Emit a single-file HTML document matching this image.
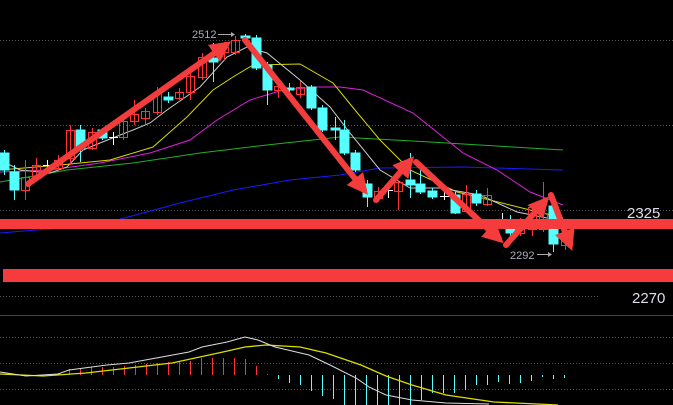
<!DOCTYPE html>
<html><head><meta charset="utf-8"><style>
html,body{margin:0;padding:0;background:#000;width:673px;height:405px;overflow:hidden}
svg{display:block}
text{font-family:"Liberation Sans",sans-serif}
</style></head><body>
<svg width="673" height="405" viewBox="0 0 673 405" xmlns="http://www.w3.org/2000/svg">
<defs>
<marker id="ah" viewBox="0 0 10 10" refX="7" refY="5" markerWidth="3.5" markerHeight="3.5" orient="auto" markerUnits="strokeWidth">
<path d="M0,0 L10,5 L0,10 z" fill="#f33c3c"/></marker>
</defs>
<g stroke="#555" stroke-width="1" stroke-dasharray="1,2">
<line x1="0" y1="40.5" x2="673" y2="40.5"/>
<line x1="0" y1="125.5" x2="673" y2="125.5"/>
<line x1="0" y1="210.5" x2="673" y2="210.5"/>
<line x1="0" y1="296.5" x2="600" y2="296.5"/>
<line x1="0" y1="337.5" x2="673" y2="337.5"/>
<line x1="0" y1="363.5" x2="673" y2="363.5"/>
<line x1="0" y1="389.5" x2="673" y2="389.5"/>
</g>
<line x1="0" y1="315.5" x2="673" y2="315.5" stroke="#444" stroke-width="1"/>

<g fill="none" stroke-width="1">
<polyline stroke="#1a1aff" points="0,233 60,228 117,220 180,203 233,190 290,180 340,175 380,168 463,167 563,170"/>
<polyline stroke="#22b022" points="0,182 67,170 133,163 200,153 267,145 340,137 430,142 513,147 563,150"/>
<polyline stroke="#e020e0" points="0,172 50,170 100,163 150,153 190,140 217,120 250,100 283,90 317,87 340,87 363,90 413,113 463,153 497,170 530,192 563,205"/>
<polyline stroke="#d8d800" points="0,170 60,165 110,160 153,147 187,117 213,90 233,77 253,65 300,64 333,83 355,110 380,140 410,170 457,192 490,200 530,210 563,218"/>
<polyline stroke="#ccc" points="0,160 20,170 50,173 67,167 83,150 100,143 133,130 150,123 167,110 200,87 227,57 247,47 267,53 300,80 330,107 350,133 380,170 410,188 440,188 480,195 517,212 547,218"/>
</g>

<g stroke-width="1">
<g stroke="#5ff" fill="#5ff">
<line x1="4.5" y1="150" x2="4.5" y2="175"/><rect x="0" y="153" width="9" height="17"/>
<line x1="14.5" y1="165" x2="14.5" y2="200"/><rect x="10" y="172" width="9" height="18"/>
<line x1="80.5" y1="125" x2="80.5" y2="162"/><rect x="76" y="130" width="9" height="18"/>
<line x1="102.5" y1="128" x2="102.5" y2="140"/><rect x="98" y="130" width="9" height="8"/>
<line x1="168.5" y1="92" x2="168.5" y2="103"/><rect x="164" y="97" width="9" height="3"/>
<line x1="213.5" y1="43" x2="213.5" y2="82"/><rect x="209" y="58" width="9" height="4"/>
<line x1="245.5" y1="34" x2="245.5" y2="40"/><rect x="241" y="36" width="9" height="2"/>
<line x1="256.5" y1="35" x2="256.5" y2="70"/><rect x="252" y="38" width="9" height="30"/>
<line x1="267.5" y1="62" x2="267.5" y2="105"/><rect x="263" y="65" width="9" height="25"/>
<line x1="289.5" y1="83" x2="289.5" y2="94"/><rect x="285" y="88" width="9" height="2"/>
<line x1="311.5" y1="85" x2="311.5" y2="110"/><rect x="307" y="87" width="9" height="21"/>
<line x1="322.5" y1="105" x2="322.5" y2="132"/><rect x="318" y="108" width="9" height="22"/>
<line x1="335.5" y1="117" x2="335.5" y2="140"/><rect x="331" y="128" width="9" height="2"/>
<line x1="344.5" y1="120" x2="344.5" y2="155"/><rect x="340" y="130" width="9" height="23"/>
<line x1="355.5" y1="150" x2="355.5" y2="172"/><rect x="351" y="153" width="9" height="17"/>
<line x1="367.5" y1="180" x2="367.5" y2="207"/><rect x="363" y="184" width="9" height="13"/>
<line x1="410.5" y1="153" x2="410.5" y2="198"/><rect x="406" y="180" width="9" height="5"/>
<line x1="420.5" y1="170" x2="420.5" y2="194"/><rect x="416" y="184" width="9" height="8"/>
<line x1="432.5" y1="188" x2="432.5" y2="199"/><rect x="428" y="191" width="9" height="6"/>
<line x1="455.5" y1="192" x2="455.5" y2="214"/><rect x="451" y="195" width="9" height="18"/>
<line x1="476.5" y1="190" x2="476.5" y2="206"/><rect x="472" y="194" width="9" height="9"/>
<line x1="510.5" y1="215" x2="510.5" y2="236"/><rect x="506" y="228" width="9" height="5"/>
<line x1="553.5" y1="195" x2="553.5" y2="252"/><rect x="549" y="206" width="9" height="38"/>
</g>
<g stroke="#f33" fill="none">
<line x1="25.5" y1="160" x2="25.5" y2="200"/><rect x="21.5" y="177.5" width="8" height="13"/>
<line x1="36.5" y1="158" x2="36.5" y2="180"/><rect x="32.5" y="165.5" width="8" height="13"/>
<line x1="58.5" y1="155" x2="58.5" y2="170"/><rect x="54.5" y="160.5" width="8" height="8"/>
<line x1="70.5" y1="125" x2="70.5" y2="165"/><rect x="66.5" y="130.5" width="8" height="28"/>
<line x1="92.5" y1="128" x2="92.5" y2="150"/><rect x="88.5" y="132.5" width="8" height="16"/>
<line x1="123.5" y1="115" x2="123.5" y2="140"/><rect x="119.5" y="121.5" width="8" height="16"/>
<line x1="134.5" y1="100" x2="134.5" y2="125"/><rect x="130.5" y="114.5" width="8" height="7"/>
<line x1="145.5" y1="108" x2="145.5" y2="124"/><rect x="141.5" y="111.5" width="8" height="7"/>
<line x1="157.5" y1="87" x2="157.5" y2="115"/><rect x="153.5" y="93.5" width="8" height="19"/>
<line x1="179.5" y1="88" x2="179.5" y2="100"/><rect x="175.5" y="92.5" width="8" height="6"/>
<line x1="190.5" y1="70" x2="190.5" y2="100"/><rect x="186.5" y="76.5" width="8" height="16"/>
<line x1="202.5" y1="53" x2="202.5" y2="80"/><rect x="198.5" y="57.5" width="8" height="20"/>
<line x1="224.5" y1="42" x2="224.5" y2="60"/><rect x="220.5" y="47.5" width="8" height="5"/>
<line x1="235.5" y1="36" x2="235.5" y2="55"/><rect x="231.5" y="40.5" width="8" height="12"/>
<line x1="278.5" y1="78" x2="278.5" y2="98"/><rect x="274.5" y="86.5" width="8" height="4"/>
<line x1="300.5" y1="81" x2="300.5" y2="98"/><rect x="296.5" y="87.5" width="8" height="7"/>
<line x1="378.5" y1="187" x2="378.5" y2="202"/><rect x="374.5" y="191.5" width="8" height="7"/>
<line x1="398.5" y1="182" x2="398.5" y2="210"/><rect x="394.5" y="182.5" width="8" height="9"/>
<line x1="466.5" y1="185" x2="466.5" y2="212"/><rect x="462.5" y="194.5" width="8" height="17"/>
<line x1="487.5" y1="188" x2="487.5" y2="206"/><rect x="483.5" y="195.5" width="8" height="9"/>
<line x1="520.5" y1="218" x2="520.5" y2="236"/><rect x="516.5" y="229.5" width="8" height="4"/>
<line x1="532.5" y1="205" x2="532.5" y2="236"/><rect x="528.5" y="207.5" width="8" height="22"/>
<line x1="543.5" y1="182" x2="543.5" y2="232"/><rect x="539.5" y="213.5" width="8" height="16"/>
<line x1="565.5" y1="230" x2="565.5" y2="250"/><rect x="561.5" y="235.5" width="8" height="10"/>
</g>
<g stroke="#fff">
<line x1="43" y1="165.5" x2="52" y2="165.5"/><line x1="47.5" y1="160" x2="47.5" y2="170"/>
<line x1="109" y1="137.5" x2="118" y2="137.5"/><line x1="113.5" y1="132" x2="113.5" y2="145"/>
<line x1="384" y1="190.5" x2="393" y2="190.5"/><line x1="388.5" y1="183" x2="388.5" y2="198"/>
<line x1="440" y1="196.5" x2="449" y2="196.5"/><line x1="444.5" y1="190" x2="444.5" y2="200"/>
<line x1="498" y1="220.5" x2="506" y2="220.5"/><line x1="502.5" y1="213" x2="502.5" y2="228"/>
</g>
</g>

<rect x="0" y="219" width="673" height="10" fill="#f53b3b"/>
<rect x="3" y="269" width="670" height="13" fill="#f53b3b"/>

<g stroke="#f33c3c" stroke-width="6" fill="none" stroke-linecap="round" marker-end="url(#ah)">
<line x1="28" y1="184" x2="226" y2="45"/>
<line x1="245" y1="40" x2="364" y2="190"/>
<line x1="376" y1="200" x2="410" y2="161"/>
<line x1="416" y1="162" x2="499" y2="239"/>
<line x1="506" y1="245" x2="545" y2="201"/>
<line x1="551" y1="195" x2="570" y2="245"/>
</g>

<text x="192" y="38" font-size="11" fill="#aab">2512</text>
<line x1="218" y1="34.5" x2="232" y2="34.5" stroke="#aaa"/><path d="M231,32 L235,34.5 L231,37z" fill="#aaa"/>
<text x="510" y="259" font-size="11" fill="#aab">2292</text>
<line x1="537" y1="254.5" x2="549" y2="254.5" stroke="#aaa"/><path d="M548,252 L552,254.5 L548,257z" fill="#aaa"/>
<text x="627" y="218" font-size="15" fill="#dde">2325</text>
<text x="632" y="303" font-size="15" fill="#dde">2270</text>

<g stroke="#f33" stroke-width="1">
<line x1="58.5" y1="375" x2="58.5" y2="373"/><line x1="69.5" y1="375" x2="69.5" y2="369"/><line x1="80.5" y1="375" x2="80.5" y2="369"/><line x1="91.5" y1="375" x2="91.5" y2="367"/><line x1="102.5" y1="375" x2="102.5" y2="367"/><line x1="113.5" y1="375" x2="113.5" y2="367"/><line x1="124.5" y1="375" x2="124.5" y2="366"/><line x1="135.5" y1="375" x2="135.5" y2="365"/><line x1="146.5" y1="375" x2="146.5" y2="364"/><line x1="157.5" y1="375" x2="157.5" y2="363"/><line x1="168.5" y1="375" x2="168.5" y2="362"/><line x1="179.5" y1="375" x2="179.5" y2="362"/><line x1="190.5" y1="375" x2="190.5" y2="361"/><line x1="201.5" y1="375" x2="201.5" y2="358"/><line x1="212.5" y1="375" x2="212.5" y2="358"/><line x1="223.5" y1="375" x2="223.5" y2="358"/><line x1="234.5" y1="375" x2="234.5" y2="358"/><line x1="245.5" y1="375" x2="245.5" y2="359"/><line x1="256.5" y1="375" x2="256.5" y2="366"/><line x1="267.5" y1="375" x2="267.5" y2="374"/>
</g>
<g stroke="#5ff" stroke-width="1">
<line x1="278.5" y1="375" x2="278.5" y2="379"/><line x1="289.5" y1="375" x2="289.5" y2="383"/><line x1="300.5" y1="375" x2="300.5" y2="385"/><line x1="311.5" y1="375" x2="311.5" y2="391"/><line x1="322.5" y1="375" x2="322.5" y2="396"/><line x1="333.5" y1="375" x2="333.5" y2="399"/><line x1="344.5" y1="375" x2="344.5" y2="405"/><line x1="355.5" y1="375" x2="355.5" y2="405"/><line x1="366.5" y1="375" x2="366.5" y2="405"/><line x1="377.5" y1="375" x2="377.5" y2="405"/><line x1="388.5" y1="375" x2="388.5" y2="405"/><line x1="399.5" y1="375" x2="399.5" y2="405"/><line x1="410.5" y1="375" x2="410.5" y2="405"/><line x1="421.5" y1="375" x2="421.5" y2="400"/><line x1="432.5" y1="375" x2="432.5" y2="393"/><line x1="443.5" y1="375" x2="443.5" y2="393"/><line x1="454.5" y1="375" x2="454.5" y2="393"/><line x1="465.5" y1="375" x2="465.5" y2="390"/><line x1="476.5" y1="375" x2="476.5" y2="385"/><line x1="487.5" y1="375" x2="487.5" y2="385"/><line x1="498.5" y1="375" x2="498.5" y2="382"/><line x1="509.5" y1="375" x2="509.5" y2="384"/><line x1="520.5" y1="375" x2="520.5" y2="383"/><line x1="531.5" y1="375" x2="531.5" y2="381"/><line x1="542.5" y1="375" x2="542.5" y2="377"/><line x1="553.5" y1="375" x2="553.5" y2="379"/><line x1="564.5" y1="375" x2="564.5" y2="378"/>
</g>
<polyline fill="none" stroke="#dd0" stroke-width="1.3" points="0,374 43,376 86,373 129,368 172,363 223,352 245,347 266,345 300,347 326,353 361,365 386,376 412,385 446,395 494,402 558,405"/>
<polyline fill="none" stroke="#ddd" stroke-width="1" points="0,372 26,376 58,374 69,370 107,365 129,363 189,352 202,347 227,342 245,337 258,340 275,347 309,355 330,365 356,378 369,387 386,395 412,400 446,403 489,404"/>
</svg>
</body></html>
